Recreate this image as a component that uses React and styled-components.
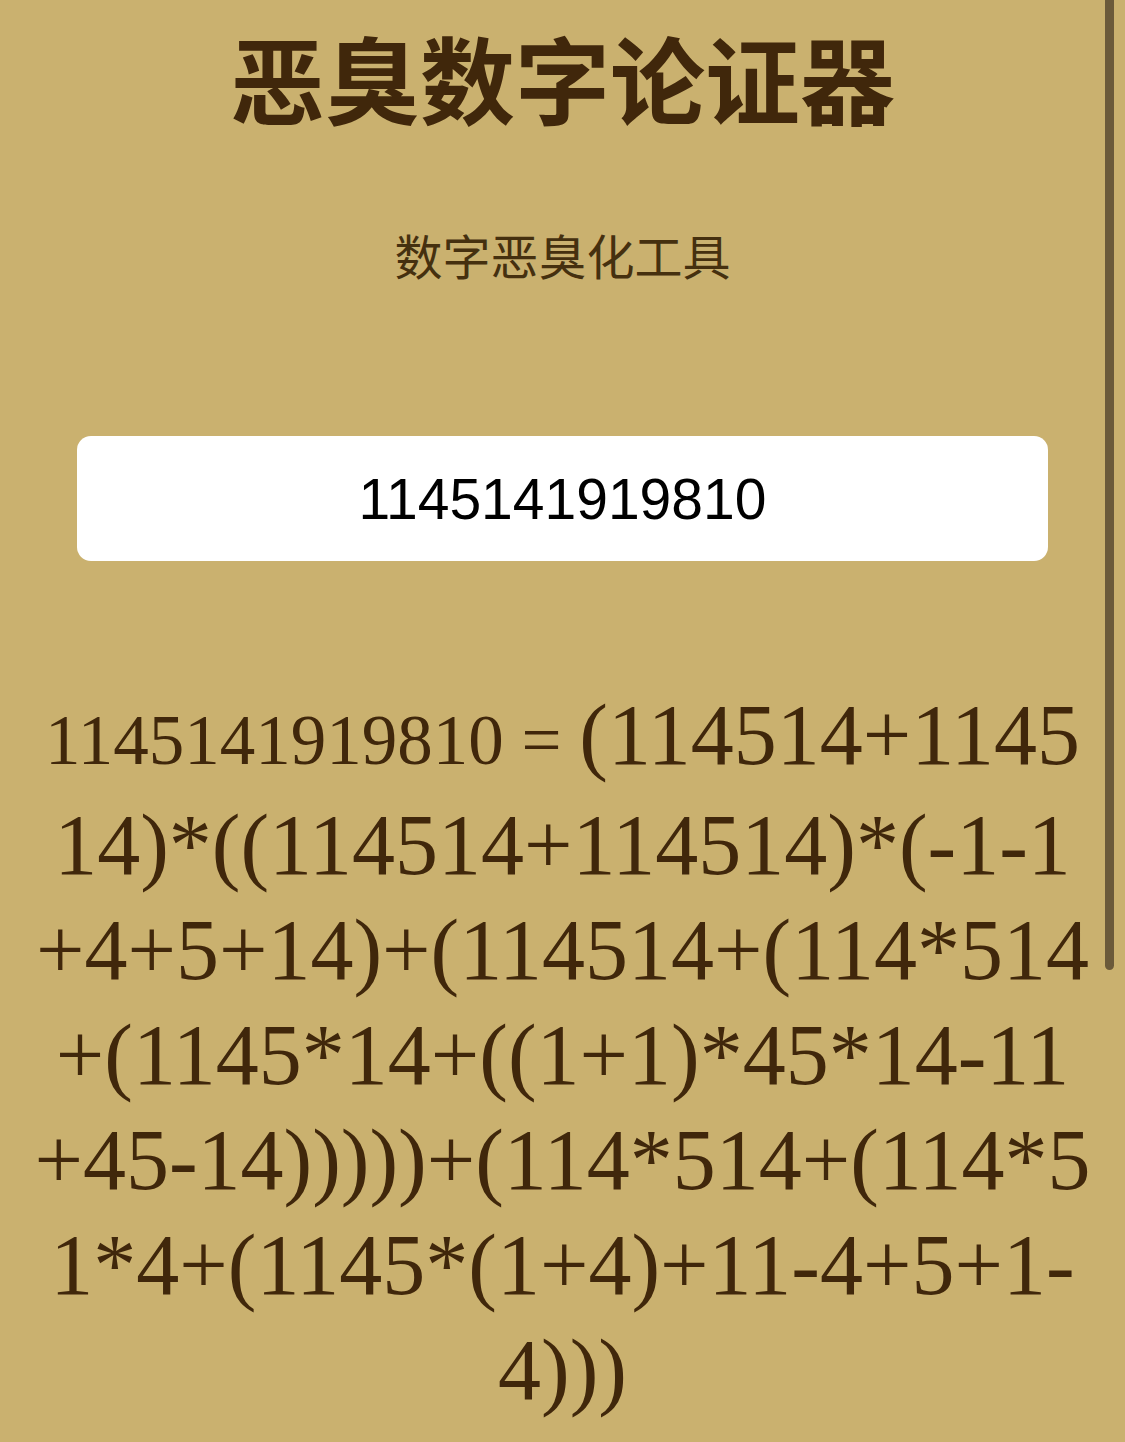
import React, { useState } from "react";
import styled, { createGlobalStyle } from "styled-components";

const GlobalStyle = createGlobalStyle`
  html, body {
    margin: 0;
    padding: 0;
    background: #cab16f;
    overflow: hidden;
  }
  body {
    font-family: "Noto Sans CJK SC", "Noto Sans", sans-serif;
    color: #40270b;
  }
`;

const Page = styled.main`
  display: flex;
  flex-direction: column;
  align-items: center;
  padding-top: 29px;
`;

const Title = styled.h1`
  margin: 0;
  font-size: 95px;
  line-height: 1;
  font-weight: 700;
  color: #40270b;
`;

const Subtitle = styled.p`
  margin: 106px 0 0;
  font-size: 48px;
  line-height: 1;
  font-weight: 400;
  color: #45300f;
`;

const NumberInput = styled.input`
  box-sizing: border-box;
  margin-top: 158px;
  width: 971px;
  height: 125px;
  border: none;
  border-radius: 14px;
  background: #fff;
  outline: none;
  text-align: center;
  font-family: "Liberation Sans", Arial, sans-serif;
  font-size: 57px;
  color: #000;
  padding: 0 20px;
`;

const Result = styled.div`
  box-sizing: border-box;
  margin-top: 122px;
  width: 1072px;
  text-align: center;
  word-break: break-all;
  font-family: "Liberation Serif", "Times New Roman", serif;
  font-size: 86px;
  line-height: 105px;
  color: #40270b;
`;

const Equals = styled.span`
  font-size: 71px;
`;

// iOS-style scroll indicator drawn over the page edge
const ScrollIndicator = styled.div`
  position: fixed;
  top: -10px;
  right: 11px;
  width: 9px;
  height: 980px;
  border-radius: 5px;
  background: #6b5a3a;
`;

const expr =
  "(114514+114514)*((114514+114514)*(-1-1+4+5+14)+(114514+(114*514+(1145*14+((1+1)*45*14-11+45-14)))))+(114*514+(114*51*4+(1145*(1+4)+11-4+5+1-4)))";

// keep operators stuck to what follows so a line never ends on "+", "*" or "("
const glue = (s) => s.replace(/([+*(])/g, "$1\u2060");

export default function App() {
  const [value, setValue] = useState("1145141919810");

  return (
    <>
      <GlobalStyle />
      <Page>
        <Title>恶臭数字论证器</Title>
        <Subtitle>数字恶臭化工具</Subtitle>
        <NumberInput value={value} onChange={(e) => setValue(e.target.value)} />
        <Result>
          <Equals>{value} = </Equals>
          {glue(expr)}
        </Result>
      </Page>
      <ScrollIndicator />
    </>
  );
}
